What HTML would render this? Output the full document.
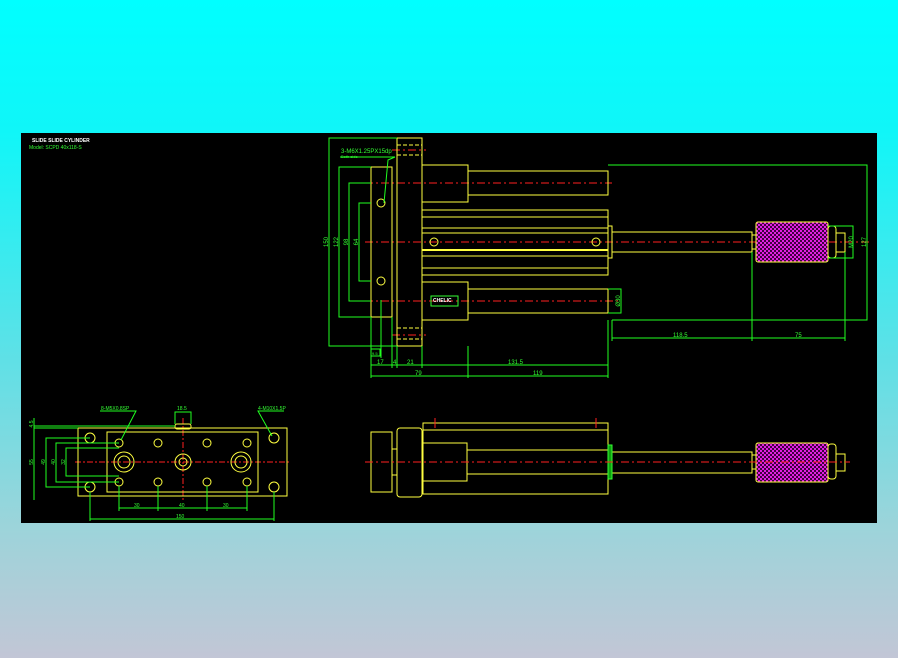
<!DOCTYPE html>
<html><head><meta charset="utf-8"><style>
html,body{margin:0;padding:0;width:898px;height:658px;overflow:hidden;
background:linear-gradient(to bottom,#00ffff 0%,#10f6f8 20%,#60e0e6 55%,#9cd4da 80%,#c2c6d6 100%);}
svg{position:absolute;left:0;top:0}
</style></head><body>
<svg width="898" height="658" viewBox="0 0 898 658" xmlns="http://www.w3.org/2000/svg" font-family="Liberation Sans, sans-serif">
<defs>
<pattern id="chk" width="4" height="4" patternUnits="userSpaceOnUse">
<rect width="4" height="4" fill="#e020e0"/><rect width="2" height="2" fill="#400040"/><rect x="2" y="2" width="2" height="2" fill="#400040"/>
</pattern>
</defs>
<rect x="21" y="133" width="856" height="390" fill="#000"/>
<text x="32" y="142" fill="#fff" font-size="5" font-weight="bold">SLIDE SLIDE CYLINDER</text>
<text x="29" y="149" fill="#3f3" font-size="5">Model: SCPD 40x118-S</text>

<!-- ===== TOP VIEW ===== -->
<g stroke="#ff2020" stroke-width="1" stroke-dasharray="8,3,2,3" fill="none">
<line x1="365" y1="183" x2="612" y2="183"/>
<line x1="365" y1="242" x2="870" y2="242"/>
<line x1="365" y1="301" x2="620" y2="301"/>
<line x1="392" y1="150" x2="426" y2="150"/>
<line x1="392" y1="335" x2="426" y2="335"/>
</g>
<g stroke="#ffff40" stroke-width="1" fill="none">
<rect x="371" y="167" width="21" height="150"/>
<rect x="397" y="138" width="25" height="208"/>
<line x1="397" y1="145" x2="422" y2="145" stroke-dasharray="4,2"/>
<line x1="397" y1="155" x2="422" y2="155" stroke-dasharray="4,2"/>
<line x1="397" y1="328" x2="422" y2="328" stroke-dasharray="4,2"/>
<line x1="397" y1="339" x2="422" y2="339" stroke-dasharray="4,2"/>
<rect x="422" y="165" width="46" height="37"/>
<rect x="468" y="171" width="140" height="24"/>
<rect x="422" y="210" width="186" height="65"/>
<line x1="422" y1="217" x2="608" y2="217"/>
<line x1="422" y1="228" x2="608" y2="228"/>
<line x1="422" y1="233" x2="608" y2="233"/>
<line x1="422" y1="250" x2="608" y2="250" stroke-width="2"/>
<line x1="422" y1="256" x2="608" y2="256"/>
<line x1="422" y1="268" x2="608" y2="268"/>
<rect x="422" y="282" width="46" height="38"/>
<rect x="468" y="289" width="140" height="24"/>
<rect x="608" y="226" width="4" height="32"/>
<rect x="612" y="232" width="140" height="20"/>
<rect x="752" y="235" width="4" height="14"/>
<rect x="828" y="226" width="8" height="32" rx="3"/>
<rect x="836" y="233" width="9" height="19"/>
<circle cx="381" cy="203" r="4"/><circle cx="381" cy="281" r="4"/>
<circle cx="434" cy="242" r="4"/><circle cx="596" cy="242" r="4"/>
</g>
<rect x="756" y="222" width="72" height="40" rx="2" fill="url(#chk)" stroke="#ffff40"/>
<rect x="431" y="296" width="27" height="10" fill="none" stroke="#3f3"/>
<text x="433" y="302" fill="#fff" font-size="5" font-weight="bold">CHELIC</text>
<g stroke="#20ff20" stroke-width="1" fill="none">
<polyline points="397,138 329,138 329,346 397,346"/>
<polyline points="371,167 339,167 339,317 371,317"/>
<polyline points="371,183 349,183 349,301 371,301"/>
<polyline points="371,203 359,203 359,281 371,281"/>
<polyline points="608,165 867,165 867,320 612,320"/>
<polyline points="828,226 853,226 853,258 828,258"/>
<polyline points="608,289 621,289 621,313 608,313"/>
<line x1="371" y1="317" x2="371" y2="378"/><line x1="381" y1="300" x2="381" y2="358"/>
<line x1="392" y1="317" x2="392" y2="368"/><line x1="397" y1="346" x2="397" y2="368"/>
<line x1="422" y1="346" x2="422" y2="368"/><line x1="468" y1="346" x2="468" y2="378"/>
<line x1="608" y1="320" x2="608" y2="378"/><line x1="612" y1="320" x2="612" y2="341"/>
<line x1="752" y1="252" x2="752" y2="341"/><line x1="845" y1="252" x2="845" y2="341"/>
<line x1="371" y1="365" x2="608" y2="365"/>
<line x1="371" y1="376" x2="608" y2="376"/>
<line x1="612" y1="338" x2="845" y2="338"/>
<polyline points="384,203 388,160 395,157"/>
<line x1="340" y1="157" x2="395" y2="157"/>
<rect x="371" y="349" width="9" height="7"/>
</g>
<g fill="#3f3" font-size="6">
<text x="341" y="153">3-M6X1.25PX15dp</text>
<text x="341" y="158" font-size="4">Both side</text>
<text x="377" y="364">17</text><text x="393" y="364">4</text><text x="407" y="364">21</text>
<text x="508" y="364">131.5</text>
<text x="415" y="375">79</text><text x="533" y="375">119</text>
<text x="673" y="337">118.5</text><text x="795" y="337">75</text>
<text x="372" y="355" font-size="4">9.5</text>
<text transform="translate(328,242) rotate(-90)" text-anchor="middle">150</text>
<text transform="translate(338,242) rotate(-90)" text-anchor="middle">122</text>
<text transform="translate(348,242) rotate(-90)" text-anchor="middle">98</text>
<text transform="translate(358,242) rotate(-90)" text-anchor="middle">64</text>
<text transform="translate(866,242) rotate(-90)" text-anchor="middle">127</text>
<text transform="translate(853,242) rotate(-90)" text-anchor="middle">M20</text>
<text transform="translate(620,301) rotate(-90)" text-anchor="middle">Ø30</text>
</g>

<!-- ===== BOTTOM RIGHT VIEW ===== -->
<g stroke="#ffff40" stroke-width="1" fill="none">
<rect x="371" y="432" width="21" height="60"/>
<line x1="392" y1="449" x2="397" y2="449"/><line x1="392" y1="475" x2="397" y2="475"/>
<rect x="397" y="428" width="25" height="69" rx="3"/>
<rect x="423" y="423" width="185" height="71"/>
<line x1="423" y1="430" x2="608" y2="430"/>
<rect x="423" y="443" width="44" height="38"/>
<line x1="467" y1="450" x2="608" y2="450"/><line x1="467" y1="474" x2="608" y2="474"/>
<rect x="612" y="452" width="140" height="21"/>
<rect x="752" y="455" width="4" height="14"/>
<rect x="828" y="444" width="8" height="35" rx="3"/>
<rect x="836" y="454" width="9" height="17"/>
</g>
<rect x="608" y="445" width="4" height="34" fill="#10a010" stroke="#3f3"/>
<rect x="756" y="443" width="72" height="39" rx="2" fill="url(#chk)" stroke="#ffff40"/>
<line x1="365" y1="462" x2="850" y2="462" stroke="#ff2020" stroke-dasharray="8,3,2,3"/>
<line x1="435" y1="418" x2="435" y2="428" stroke="#ff2020"/>
<line x1="596" y1="418" x2="596" y2="428" stroke="#ff2020"/>

<!-- ===== BOTTOM LEFT VIEW ===== -->
<g stroke="#ff2020" stroke-width="1" stroke-dasharray="6,2,2,2" fill="none">
<line x1="75" y1="462" x2="290" y2="462"/>
<line x1="183" y1="418" x2="183" y2="500"/>
</g>
<g stroke="#ffff40" stroke-width="1" fill="none">
<rect x="78" y="428" width="209" height="68"/>
<rect x="107" y="432" width="151" height="60"/>
<circle cx="124" cy="462" r="10"/><circle cx="124" cy="462" r="6"/>
<circle cx="241" cy="462" r="10"/><circle cx="241" cy="462" r="6"/>
<circle cx="183" cy="462" r="8"/><circle cx="183" cy="462" r="4"/>
<circle cx="119" cy="443" r="4"/><circle cx="158" cy="443" r="4"/><circle cx="207" cy="443" r="4"/><circle cx="247" cy="443" r="4"/>
<circle cx="119" cy="482" r="4"/><circle cx="158" cy="482" r="4"/><circle cx="207" cy="482" r="4"/><circle cx="247" cy="482" r="4"/>
<circle cx="90" cy="438" r="5"/><circle cx="90" cy="487" r="5"/><circle cx="274" cy="438" r="5"/><circle cx="274" cy="487" r="5"/>
<rect x="175" y="424" width="16" height="5" rx="2"/>
</g>
<g stroke="#20ff20" stroke-width="1" fill="none">
<polyline points="175,426 34,426"/><polyline points="78,428 34,428"/>
<line x1="34" y1="418" x2="34" y2="500"/>
<polyline points="90,438 46,438 46,487 90,487"/>
<polyline points="119,443 56,443 56,482 119,482"/>
<polyline points="119,448 66,448 66,476 119,476"/>
<line x1="119" y1="486" x2="119" y2="511"/><line x1="158" y1="486" x2="158" y2="511"/>
<line x1="207" y1="486" x2="207" y2="511"/><line x1="247" y1="486" x2="247" y2="511"/>
<line x1="119" y1="508" x2="247" y2="508"/>
<line x1="90" y1="492" x2="90" y2="521"/><line x1="274" y1="492" x2="274" y2="521"/>
<line x1="90" y1="519" x2="274" y2="519"/>
<polyline points="121,440 136,411 100,411"/>
<polyline points="272,436 258,411 284,411"/>
<polyline points="175,424 175,412 191,412 191,424"/>
</g>
<g fill="#3f3" font-size="5">
<text x="101" y="410">8-M5X0.8SP</text>
<text x="258" y="410">4-M10X1.5P</text>
<text x="177" y="410">18.5</text>
<text x="134" y="507">30</text><text x="179" y="507">40</text><text x="223" y="507">30</text>
<text x="176" y="518">150</text>
<text transform="translate(33,462) rotate(-90)" text-anchor="middle">55</text>
<text transform="translate(45,462) rotate(-90)" text-anchor="middle">49</text>
<text transform="translate(55,462) rotate(-90)" text-anchor="middle">40</text>
<text transform="translate(65,462) rotate(-90)" text-anchor="middle">32</text>
<text transform="translate(33,424) rotate(-90)" text-anchor="middle">4.5</text>
</g>
</svg>
</body></html>
